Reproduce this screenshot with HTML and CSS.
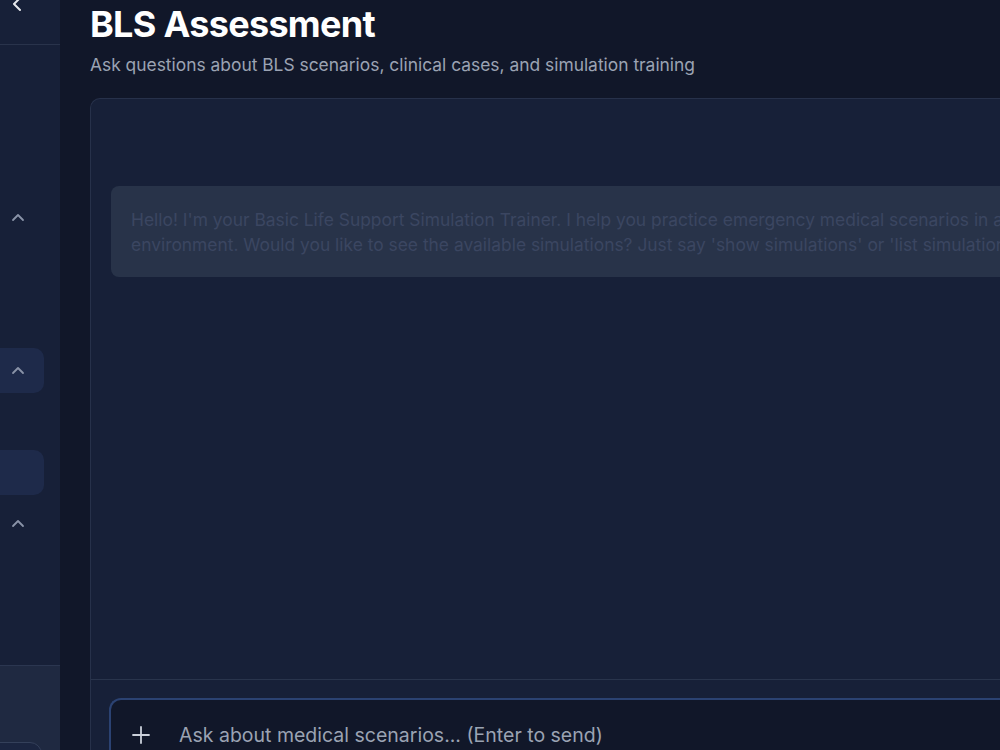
FILE: index.html
```html
<!DOCTYPE html>
<html>
<head>
<meta charset="utf-8">
<link rel="stylesheet" href="styles.css">
</head>
<body>
<div class="app">
  <aside class="sidebar">
    <div class="side-head">
      <svg class="back" width="14" height="20" viewBox="0 0 14 20"><path d="M10 -2 L4 4 L10 10" fill="none" stroke="#e5e7eb" stroke-width="2" stroke-linecap="round" stroke-linejoin="round"/></svg>
    </div>
    <div class="side-body">
      <div class="side-item s1"><svg class="chev" width="14" height="10" viewBox="0 0 14 10"><path d="M2 7 L7 2 L12 7" fill="none" stroke="#8a93a8" stroke-width="1.8" stroke-linecap="round" stroke-linejoin="round"/></svg></div>
      <div class="side-item s2 active"><svg class="chev" width="14" height="10" viewBox="0 0 14 10"><path d="M2 7 L7 2 L12 7" fill="none" stroke="#8a93a8" stroke-width="1.8" stroke-linecap="round" stroke-linejoin="round"/></svg></div>
      <div class="side-item s3 active"></div>
      <div class="side-item s4"><svg class="chev" width="14" height="10" viewBox="0 0 14 10"><path d="M2 7 L7 2 L12 7" fill="none" stroke="#8a93a8" stroke-width="1.8" stroke-linecap="round" stroke-linejoin="round"/></svg></div>
    </div>
    <div class="side-foot">
      <div class="foot-card"></div>
    </div>
  </aside>
  <main class="main">
    <h1 class="title">BLS Assessment</h1>
    <p class="subtitle">Ask questions about BLS scenarios, clinical cases, and simulation training</p>
    <section class="panel">
      <div class="messages">
        <div class="bubble">Hello! I'm your Basic Life Support Simulation Trainer. I help you practice emergency medical scenarios in a safe learning environment. Would you like to see the available simulations? Just say 'show simulations' or 'list simulations'.</div>
      </div>
      <div class="composer">
        <div class="input-box">
          <svg class="plus" width="20" height="20" viewBox="0 0 20 20"><path d="M10 2 V18 M2 10 H18" stroke="#cbd0da" stroke-width="1.8" stroke-linecap="round"/></svg>
          <span class="placeholder">Ask about medical scenarios... (Enter to send)</span>
        </div>
      </div>
    </section>
  </main>
</div>
</body>
</html>
```
FILE: styles.css
```css
* { box-sizing: border-box; }
html, body { margin: 0; padding: 0; }
body {
  width: 1000px;
  height: 750px;
  overflow: hidden;
  background: #111729;
  font-family: Inter, "Noto Sans", sans-serif;
}
.app {
  display: flex;
  height: 750px;
}
.sidebar {
  width: 60px;
  flex: none;
  background: #172038;
  display: flex;
  flex-direction: column;
}
.side-head {
  height: 45px;
  border-bottom: 1px solid #29334b;
  position: relative;
}
.back {
  position: absolute;
  left: 10px;
  top: 0;
}
.side-body {
  flex: 1;
  position: relative;
}
.side-item {
  position: absolute;
  left: -20px;
  width: 64px;
  height: 45px;
  border-radius: 10px;
  display: flex;
  align-items: center;
  justify-content: flex-end;
  padding-right: 19px;
}
.side-item.active { background: #1e2a4a; }
.s1 { top: 150px; }
.s2 { top: 303px; }
.s3 { top: 405px; }
.s4 { top: 456px; }
.side-foot {
  height: 85px;
  background: #1f2941;
  border-top: 1px solid #2b3650;
  position: relative;
  overflow: hidden;
}
.foot-card {
  position: absolute;
  left: -20px;
  top: 76px;
  width: 62px;
  height: 40px;
  border: 1px solid #34405a;
  border-radius: 12px;
  background: #1b2540;
}
.main {
  flex: 1;
  padding-left: 30px;
  min-width: 0;
  display: flex;
  flex-direction: column;
}
.title {
  margin: 0;
  margin-top: 2px;
  font-size: 36px;
  line-height: 44px;
  font-weight: 700;
  color: #ffffff;
  letter-spacing: -0.7px;
  white-space: nowrap;
}
.subtitle {
  margin: 7px 0 0;
  font-size: 17.4px;
  line-height: 24px;
  color: #9ba3b3;
  white-space: nowrap;
}
.panel {
  margin-top: 21px;
  width: 960px;
  flex: 1;
  background: #172038;
  border: 1px solid #27314a;
  border-right: none;
  border-bottom: none;
  border-radius: 10px 0 0 0;
  display: flex;
  flex-direction: column;
}
.messages {
  flex: 1;
  padding: 87px 0 0 20px;
}
.bubble {
  width: 1040px;
  background: #283349;
  border-radius: 8px;
  padding: 21px 20px 20px 20px;
  height: 91px;
  font-size: 17.4px;
  line-height: 25px;
  color: #3b4661;
  overflow: hidden;
}
.composer {
  height: 71px;
  border-top: 1px solid #29344c;
  padding: 18px 0 0 18px;
}
.input-box {
  height: 70px;
  width: 900px;
  background: #111729;
  border: 2px solid #2b4272;
  border-right: none;
  border-radius: 12px 0 0 0;
  display: flex;
  align-items: flex-start;
  padding: 23px 0 0 20px;
}
.plus { flex: none; margin-top: 2px; }
.placeholder {
  margin-left: 28px;
  font-size: 19.5px;
  line-height: 24px;
  color: #9ba3b3;
  white-space: nowrap;
}
```
